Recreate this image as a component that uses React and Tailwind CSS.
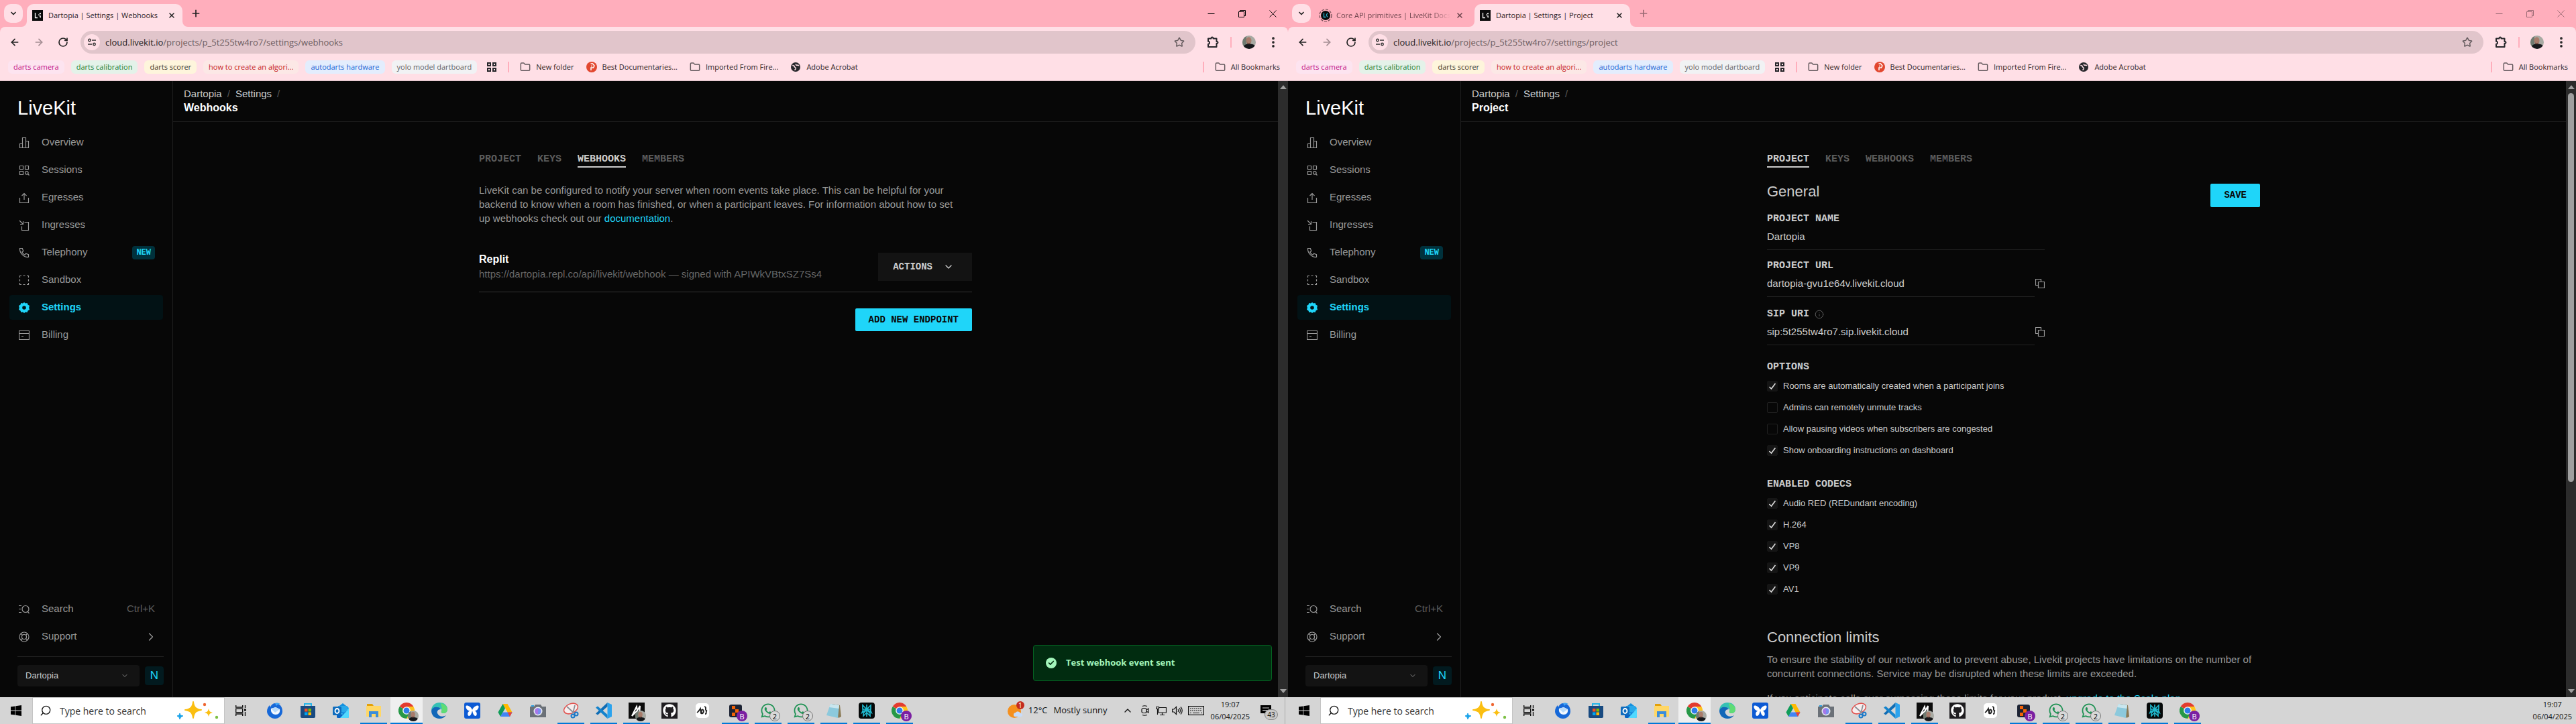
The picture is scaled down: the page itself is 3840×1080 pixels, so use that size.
import React from "react";
import {
  ArrowLeft, ArrowRight, RotateCw, ChevronDown, ChevronRight, ChevronUp, Plus, X, Star, EllipsisVertical,
  Folder, Search, Check, Info,
} from "lucide-react";
import { FaGithub, FaWhatsapp } from "react-icons/fa";

const UI = "font-['Open_Sans','Noto_Sans',sans-serif]";
const SANS = "font-['Liberation_Sans',Arial,sans-serif]";
const MONO = "font-['Liberation_Mono',monospace]";

/* ---------- browser chrome ---------- */

function Favicon() {
  return (
    <svg className="size-4 shrink-0" viewBox="0 0 16 16" aria-hidden="true">
      <rect width="16" height="16" fill="#0a0a0a" />
      <path d="M4.5 4v7.5H8M9 7.2h1.6M10.6 5.6h1.6V4M10.6 8.8h1.6v2.7" stroke="#fff" strokeWidth="1.3" fill="none" />
    </svg>
  );
}

function DocsIcon() {
  return (
    <svg className="size-5 shrink-0" viewBox="0 0 20 20" aria-hidden="true">
      <circle cx="10" cy="10" r="9" fill="none" stroke="#6e4b52" strokeWidth="1.2" strokeDasharray="4 2" />
      <circle cx="10" cy="10" r="7" fill="#0a0a0a" />
      <path d="M7.5 6.5v6h3M11 9.5l2-3M11 9.5l2 3" stroke="#29b9d8" strokeWidth="1.3" fill="none" />
    </svg>
  );
}

function Tab({ title, active, docs }) {
  return (
    <div className={"relative flex h-[34px] w-[232px] items-center rounded-t-[10px] pr-[10px] " + (docs ? "pl-1.5" : "pl-2") + (active ? " bg-[#ffdfe6]" : "")}>
      {active && (
        <svg className="absolute bottom-0 -left-2 size-2" viewBox="0 0 8 8" aria-hidden="true"><path d="M8 0v8H0a8 8 0 0 0 8-8" fill="#ffdfe6" /></svg>
      )}
      {active && (
        <svg className="absolute -right-2 bottom-0 size-2" viewBox="0 0 8 8" aria-hidden="true"><path d="M0 0v8h8a8 8 0 0 1-8-8" fill="#ffdfe6" /></svg>
      )}
      {docs ? <DocsIcon /> : <Favicon />}
      <button className={"flex-1 overflow-hidden text-left text-[11px] leading-5 whitespace-nowrap " + (docs ? "ml-1.5 bg-linear-to-r from-[#6b434b] from-85% to-transparent bg-clip-text text-transparent" : "ml-2 text-[#2a2024]")}>{title}</button>
      <button aria-label="Close tab" className="ml-2 shrink-0"><X className={"size-3 " + (active ? "text-[#222]" : "text-[#6b434b]")} strokeWidth={3} /></button>
    </div>
  );
}

function WindowControls({ active }) {
  return (
    <div className={"ml-auto flex h-10 items-center " + (active ? "text-black" : "text-[#9b6a74]")}>
      <button aria-label="Minimise" className="flex w-[46px] justify-center">
        <svg width="11" height="11" viewBox="0 0 11 11"><path d="M.5 5.5h10" stroke="currentColor" /></svg>
      </button>
      <button aria-label="Restore" className="flex w-[46px] justify-center">
        <svg width="11" height="11" viewBox="0 0 11 11" fill="none" stroke="currentColor"><path d="M.5 2.5h8v8h-8zM2.5 2.5v-2h8v8h-2" /></svg>
      </button>
      <button aria-label="Close" className="flex w-[46px] justify-center">
        <svg width="11" height="11" viewBox="0 0 11 11"><path d="M.5.5l10 10M10.5.5l-10 10" stroke="currentColor" /></svg>
      </button>
    </div>
  );
}

function TuneIcon() {
  return (
    <svg className="size-3.5" viewBox="0 0 14 14" fill="none" stroke="#333" strokeWidth="1.5" aria-hidden="true">
      <circle cx="3.5" cy="4" r="1.7" /><path d="M7 4h6M1 10h6" /><circle cx="10.5" cy="10" r="1.7" />
    </svg>
  );
}

function Puzzle() {
  return (
    <svg className="size-5" viewBox="0 0 20 20" fill="none" stroke="#27272b" strokeWidth="2" strokeLinejoin="round" aria-hidden="true">
      <path d="M3 4.5h4.500V4a1.300 1.300 0 0 1 3 0v.5H15.500V9h.6a1.400 1.400 0 0 1 0 2.800h-.6V17H3v-4.200a2 2 0 0 0 0-4z" />
    </svg>
  );
}

function Avatar({ className }) {
  return (
    <svg className={className} viewBox="0 0 20 20" aria-hidden="true">
      <clipPath id="avatarClip"><circle cx="10" cy="10" r="10" /></clipPath>
      <g clipPath="url(#avatarClip)">
        <rect width="20" height="20" fill="#a8aaa3" />
        <rect width="6" height="20" fill="#6f7a70" />
        <path d="M1 20c0-6 4-7 8-8l6 1c4 1 5 4 5 7z" fill="#17181b" />
        <ellipse cx="9.5" cy="7.5" rx="4" ry="5.3" fill="#a87c6c" />
        <path d="M7 10.5c1.500 1 3.500 1 5 0l-.5 2.300H7.600z" fill="#70493f" />
      </g>
    </svg>
  );
}

const chips = [
  ["darts camera", "bg-[#fde4f0] text-[#c2128a]"],
  ["darts calibration", "bg-[#e4f2e9] text-[#188038]"],
  ["darts scorer", "bg-[#fef5dc] text-[#3f3a2c]"],
  ["how to create an algori...", "bg-[#fce8e6] text-[#c5221f]"],
  ["autodarts hardware", "bg-[#e3edfd] text-[#1a66d6]"],
  ["yolo model dartboard", "bg-[#f1f2f4] text-[#5f6368]"],
];

function Bookmark({ icon, children }) {
  return <a href="#" className="flex items-center gap-2">{icon}<span>{children}</span></a>;
}

const folder = <Folder className="size-4 text-[#62585c]" strokeWidth={2.2} />;

function Chrome({ tabs, url, active }) {
  return (
    <header className={"shrink-0 bg-[#ffaebc] " + UI}>
      <div className="flex h-10 items-end pl-1.5">
        <button aria-label="Search tabs" className="mb-1.5 flex size-7 items-center justify-center rounded-[10px] bg-[#ffdfe6]">
          <ChevronDown className="size-3 text-[#222]" strokeWidth={3.5} />
        </button>
        <div className="ml-1.5 flex gap-1.5">
          {tabs.map((t) => <Tab key={t.title} {...t} />)}
        </div>
        <button aria-label="New tab" className="mb-3 ml-3"><Plus className={"size-4 " + (active ? "text-[#222]" : "text-[#9b6a74]")} strokeWidth={2.5} /></button>
        <WindowControls active={active} />
      </div>
      <div className="rounded-t-lg border-b border-[#d9bcc3] bg-[#ffdfe6]">
        <div className="flex h-[46px] items-center pr-3 pl-3.5 text-[#222]">
          <button aria-label="Back"><ArrowLeft className="size-4" strokeWidth={2.5} /></button>
          <button aria-label="Forward" className="ml-5"><ArrowRight className="size-4 text-[#a48d93]" strokeWidth={2.5} /></button>
          <button aria-label="Reload" className="ml-5"><RotateCw className="size-4" strokeWidth={2.5} /></button>
          <div className="ml-[18px] flex h-[34px] flex-1 items-center rounded-full bg-[#e1c5cb] pr-4 pl-[5px]">
            <button aria-label="Site information" className="flex size-6 items-center justify-center rounded-full bg-[#ffdfe6]"><TuneIcon /></button>
            <div className="ml-2 flex-1 text-[13px] leading-5 text-[#6d5d61]"><span className="text-[#221c1e]">cloud.livekit.io</span>{url}</div>
            <button aria-label="Bookmark this tab"><Star className="size-4 text-[#655b5e]" strokeWidth={2.2} /></button>
          </div>
          <button aria-label="Extensions" className="ml-4"><Puzzle /></button>
          <div className="ml-4 h-4 w-0.5 bg-[#ffaebc]" />
          <button aria-label="Profile" className="ml-4"><Avatar className="size-5" /></button>
          <button aria-label="Menu" className="ml-4"><EllipsisVertical className="size-5" strokeWidth={2.5} /></button>
        </div>
        <nav className="flex h-[34px] items-center px-3 pb-1.5 text-[11px] leading-5 text-[#2c2428]">
          <div className="flex gap-2.5">
            {chips.map(([name, look]) => (
              <button key={name} className={"h-5 rounded-md px-2 whitespace-nowrap " + look}>{name}</button>
            ))}
          </div>
          <button aria-label="Tab groups" className="ml-3.5">
            <svg className="size-4" viewBox="0 0 16 16" fill="none" stroke="#27272b" strokeWidth="2"><path d="M2 2h4v4H2zM10 2h4v4h-4zM2 10h4v4H2zM10 10h4v4h-4z" /></svg>
          </button>
          <div className="mx-4 h-4 w-0.5 bg-[#ffaebc]" />
          <div className="flex gap-[18px]">
            <Bookmark icon={folder}>New folder</Bookmark>
            <Bookmark icon={
              <svg className="size-4" viewBox="0 0 16 16"><circle cx="8" cy="8" r="8" fill="#e2472f" /><path d="M6.500 3h3l2.500 3-1.500 3H7v4M7 6.500h2" stroke="#fff" strokeWidth="1.5" fill="none" /></svg>
            }>Best Documentaries...</Bookmark>
            <Bookmark icon={folder}>Imported From Fire...</Bookmark>
            <Bookmark icon={
              <svg className="size-4" viewBox="0 0 16 16"><circle cx="8" cy="8" r="7" fill="#27272b" /><path d="M3.200 5.500c2 0 3 1 3 2s2.500 1 2 3c-.4 1.200-1.200 1.500-1.700 2M8.500 3.500c-.5 1.500 1 2 2 1.700 1-.2 2 .3 2.200 1" stroke="#ffdfe6" strokeWidth="1.6" fill="none" /></svg>
            }>Adobe Acrobat</Bookmark>
          </div>
          <div className="mr-4 ml-auto h-4 w-0.5 bg-[#ffaebc]" />
          <Bookmark icon={folder}>All Bookmarks</Bookmark>
        </nav>
      </div>
    </header>
  );
}

/* ---------- dashboard ---------- */

const navIcons = {
  Overview: <path d="M1.500 15.500v-6h4V.5h5v5h4v10zM5.500 9.500v6M10.500 5.500v10" />,
  Sessions: <><path d="M1.500 1.500h5v5h-5zM9.500 1.500h5v5h-5zM1.500 9.500h5v5h-5z" /><circle cx="11.800" cy="11.800" r="2.300" /><path d="M13.500 13.500l2 2" /></>,
  Egresses: <path d="M1.500 8v7.500h13V8M8 11V1.500M4.500 5L8 1.500 11.500 5" />,
  Ingresses: <path d="M8.500 3.500h6v12h-10v-6M1 1l5 5M6.500 2v4.500H2" />,
  Telephony: <path d="M1.500 1.500h3.800l1.500 4-2 1.500c.8 2 2.200 3.400 4.200 4.200l1.500-2 4 1.500v3.800C7.500 15 1 8.500 1.500 1.500z" />,
  Sandbox: <path d="M1.500 4V1.500H4M6.500 1.500h3M12 1.500h2.500V4M14.500 6.500v3M14.500 12v2.500H12M9.500 14.500h-3M4 14.500H1.500V12M1.500 9.500v-3" />,
  Billing: <path d="M.5 1.500h15v13H.5zM.5 5.500h15M4 9.500h3" />,
  Search: <><path d="M0 2.500h4M0 7.500h3M0 12.500h4" /><circle cx="10" cy="7.500" r="5" /><path d="M13 11l2.500 3" /></>,
  Support: <><circle cx="8" cy="8" r="7" /><circle cx="8" cy="8" r="3.500" /><path d="M3 3l2.500 2.500M13 3l-2.500 2.500M3 13l2.500-2.500M13 13l-2.500-2.500" /></>,
};

function NavIcon({ name }) {
  if (name === "Settings") {
    return (
      <svg className="size-4 shrink-0" viewBox="0 0 16 16" aria-hidden="true">
        <path fillRule="evenodd" fill="#1fd5f9" d="M8 0l2 1.600 2.600-.6.9 2.500L16 5l-.8 3 .8 3-2.500 1.500-.9 2.500-2.600-.6L8 16l-2-1.600-2.600.6-.9-2.500L0 11l.8-3L0 5l2.500-1.500.9-2.500 2.600.6zM8 5.200a2.800 2.800 0 1 0 0 5.600 2.800 2.800 0 0 0 0-5.600z" />
      </svg>
    );
  }
  return <svg className="size-4 shrink-0" viewBox="0 0 16 16" fill="none" stroke="currentColor" strokeWidth="1.2" aria-hidden="true">{navIcons[name]}</svg>;
}

function NavItem({ name, children }) {
  const on = name === "Settings";
  return (
    <a href="#" className={"flex h-[37px] items-center gap-[18px] rounded pr-3 pl-3.5 text-[15px] " + (on ? "bg-[#021215] font-bold text-[#1fd5f9]" : "text-[#999]")}>
      <NavIcon name={name} />
      <span>{name}</span>
      {children}
    </a>
  );
}

function Sidebar() {
  return (
    <aside className="flex w-[258px] shrink-0 flex-col border-r border-[#1f1f1f] px-3.5 pb-4">
      <div className="flex h-[73px] shrink-0 items-center pt-2 pl-3 text-[29px] leading-none text-white">LiveKit</div>
      <nav className="flex flex-col gap-1">
        {["Overview", "Sessions", "Egresses", "Ingresses", "Telephony", "Sandbox", "Settings", "Billing"].map((n) => (
          <NavItem key={n} name={n}>
            {n === "Telephony" && <span className={"ml-auto rounded bg-[#00313c] px-1.5 text-[12px] leading-5 font-bold text-[#1fd5f9] " + MONO}>NEW</span>}
          </NavItem>
        ))}
      </nav>
      <div className="mt-auto flex flex-col gap-1">
        <NavItem name="Search"><span className="ml-auto text-[#5c5c5c]">Ctrl+K</span></NavItem>
        <NavItem name="Support"><ChevronRight className="-mr-1 ml-auto size-5" strokeWidth={1.5} /></NavItem>
      </div>
      <div className="mx-3 mt-[11px] -mr-px flex items-center gap-2 border-t border-[#222] pt-3">
        <button className="flex h-8 flex-1 items-center justify-between rounded bg-[#131313] pr-4 pl-3 text-[13px] text-[#ccc]">
          Dartopia<ChevronDown className="size-3 text-[#888]" strokeWidth={2} />
        </button>
        <button className="size-7 rounded bg-[#021a1f] text-[17px] text-[#1fd5f9]">N</button>
      </div>
    </aside>
  );
}

function Scrollbar({ thumb }) {
  return (
    <div className="flex w-[15px] shrink-0 flex-col items-center bg-[#2c2c2c] py-1.5" aria-hidden="true">
      <svg className="w-2.5 shrink-0" viewBox="0 0 10 6"><path d="M5 0l5 6H0z" fill="#9f9f9f" /></svg>
      {thumb ? <div className="mt-1.5 h-[64%] w-[9px] rounded-full bg-[#9f9f9f]" /> : null}
      <svg className="mt-auto w-2.5 shrink-0" viewBox="0 0 10 6"><path d="M5 6L0 0h10z" fill="#9f9f9f" /></svg>
    </div>
  );
}

function Dashboard({ page, children, thumb }) {
  return (
    <div className={"relative flex min-h-0 flex-1 bg-[#070707] " + SANS}>
      <Sidebar />
      <div className="flex min-w-0 flex-1 flex-col overflow-hidden">
        <div className="shrink-0 border-b border-[#1f1f1f] px-4 pt-2 pb-2.5 leading-[21px]">
          <div className="flex gap-2 text-[15px] text-[#ccc]">
            <a href="#">Dartopia</a><span className="text-[#555]">/</span><a href="#">Settings</a><span className="text-[#555]">/</span>
          </div>
          <h1 className="text-[16px] font-bold text-white">{page}</h1>
        </div>
        <main className="mx-auto min-h-0 w-full max-w-[735px] flex-1 pt-[46px]">
          <nav className={"flex gap-6 text-[15px] leading-5 font-bold " + MONO}>
            {["Project", "Keys", "Webhooks", "Members"].map((t) => (
              <a key={t} href="#" className={"border-b-2 uppercase " + (t === page ? "border-[#ccc] text-[#ccc]" : "border-transparent text-[#5c5c5c]")}>{t}</a>
            ))}
          </nav>
          {children}
        </main>
      </div>
      <Scrollbar thumb={thumb} />
    </div>
  );
}

const primary = "rounded-xs bg-[#1fd5f9] px-5 text-[14px] font-bold text-[#0a0a0a] uppercase " + MONO;

function WebhooksPage() {
  return (
    <Dashboard page="Webhooks">
      <p className="mt-[23px] pr-5 text-[15px] leading-[21px] text-[#999]">
        LiveKit can be configured to notify your server when room events take place. This can be helpful for your backend to know when a room has finished, or when a participant leaves. For information about how to set up webhooks check out our <a href="#" className="text-[#1fd5f9]">documentation</a>.
      </p>
      <div className="mt-[41px] flex justify-between border-b border-[#333] pb-4">
        <div>
          <h2 className="text-[16px] leading-5 font-bold text-white">Replit</h2>
          <p className="mt-0.5 text-[15px] leading-5 text-[#666]">https://dartopia.repl.co/api/livekit/webhook — signed with APIWkVBtxSZ7Ss4</p>
        </div>
        <button className={"flex h-[42px] items-center gap-4 bg-[#131313] pr-[27px] pl-[22px] text-[14px] font-bold text-[#ccc] " + MONO}>
          ACTIONS<ChevronDown className="size-4" strokeWidth={2} />
        </button>
      </div>
      <div className="mt-6 flex justify-end"><button className={"h-[34px] " + primary}>Add new endpoint</button></div>
      <div role="status" className={"absolute right-6 bottom-6 flex h-[54px] w-[356px] items-center gap-3.5 rounded border border-[#046322] bg-[#012c10] px-[18px] text-[13px] font-bold text-[#a3f5bb] " + UI}>
        <span className="flex size-4 items-center justify-center rounded-full bg-[#a3f5bb]"><Check className="size-2.5 text-[#012c10]" strokeWidth={4} /></span>
        Test webhook event sent
      </div>
    </Dashboard>
  );
}

const label = "block text-[15px] leading-5 font-bold text-[#ccc] " + MONO;

function Field({ id, title, value, copy, info, className }) {
  return (
    <div className={className + " w-[414px]"}>
      <div className="flex items-center gap-2">
        <label htmlFor={id} className={label}>{title}</label>
        {info && <Info className="size-3.5 text-[#666]" strokeWidth={1.5} />}
      </div>
      <div className="mt-1.5 flex items-start gap-px">
        <input id={id} defaultValue={value} readOnly={copy} className="h-[30px] min-w-0 flex-1 border-b border-[#222] bg-transparent pb-2.5 text-[15px] leading-5 text-[#ccc]" />
        {copy && (
          <button aria-label={"Copy " + title} className="mt-[3px]">
            <svg className="size-3.5" viewBox="0 0 14 14" fill="none" stroke="#999" strokeWidth="1.2"><path d="M4.500 9.500h-4v-9h8v3.500M4.500 4.500h9v9h-9z" /></svg>
          </button>
        )}
      </div>
    </div>
  );
}

function Checks({ title, items, className }) {
  return (
    <fieldset className={className}>
      <legend className={label}>{title}</legend>
      <div className="mt-2.5 flex flex-col items-start gap-4">
        {items.map(([text, on]) => (
          <label key={text} className="flex h-4 items-center gap-2 text-[13px] text-[#ccc]">
            <span className="grid size-4 place-items-center">
              <input type="checkbox" defaultChecked={on} className="peer col-start-1 row-start-1 size-4 appearance-none rounded-xs border border-[#222] checked:border-[#151515] checked:bg-[#151515]" />
              <svg className="pointer-events-none invisible col-start-1 row-start-1 size-3 peer-checked:visible" viewBox="0 0 12 12" fill="none" stroke="#ddd" strokeWidth="1.6"><path d="M1.500 7L4.500 10 10.500 2" /></svg>
            </span>
            {text}
          </label>
        ))}
      </div>
    </fieldset>
  );
}

function ProjectPage() {
  return (
    <Dashboard page="Project" thumb>
      <div className="mt-6 flex items-start justify-between">
        <h2 className="text-[22px] leading-6 text-[#ccc]">General</h2>
        <button className={"h-[35px] " + primary}>Save</button>
      </div>
      <Field className="mt-2" id="project-name" title="PROJECT NAME" value="Dartopia" />
      <Field className="mt-3.5" id="project-url" title="PROJECT URL" value="dartopia-gvu1e64v.livekit.cloud" copy />
      <Field className="mt-4" id="sip-uri" title="SIP URI" value="sip:5t255tw4ro7.sip.livekit.cloud" copy info />
      <Checks className="mt-[23px]" title="OPTIONS" items={[
        ["Rooms are automatically created when a participant joins", true],
        ["Admins can remotely unmute tracks", false],
        ["Allow pausing videos when subscribers are congested", false],
        ["Show onboarding instructions on dashboard", true],
      ]} />
      <Checks className="mt-[33px]" title="ENABLED CODECS" items={[
        ["Audio RED (REDundant encoding)", true], ["H.264", true], ["VP8", true], ["VP9", true], ["AV1", true],
      ]} />
      <h2 className="mt-[52px] text-[22px] leading-6 text-[#ccc]">Connection limits</h2>
      <p className="mt-2.5 text-[15px] leading-[21px] text-[#999]">To ensure the stability of our network and to prevent abuse, Livekit projects have limitations on the number of concurrent connections. Service may be disrupted when these limits are exceeded.</p>
      <p className="mt-4 text-[15px] leading-[21px] text-[#999]">If you anticipate calls ever surpassing these limits for your product, <a href="#" className="text-[#1fd5f9]">upgrade to the Scale plan</a>.</p>
    </Dashboard>
  );
}

/* ---------- taskbar ---------- */

function Badge({ children, look }) {
  return <span className={"absolute -right-1.5 -bottom-1 flex size-4 items-center justify-center rounded-full text-[11px] leading-none " + look}>{children}</span>;
}

const purple = "bg-[#7b1fa2] text-white";
const grey = "border border-[#777] bg-[#d8d8d8] text-black";

const ChromeLogo = () => (
  <svg className="size-6" viewBox="0 0 24 24">
    <circle cx="12" cy="12" r="12" fill="#fff" />
    <path d="M12 12L1.600 6A12 12 0 0 1 22.400 6z" fill="#e33b2e" />
    <path d="M12 12L1.600 6A12 12 0 0 0 12 24l5.200-9z" fill="#279847" />
    <path d="M12 12l5.200 3L12 24A12 12 0 0 0 22.400 6H12z" fill="#fcc31e" />
    <circle cx="12" cy="12" r="5.800" fill="#fff" /><circle cx="12" cy="12" r="4.500" fill="#2f7de9" />
  </svg>
);

const WhatsApp = () => <FaWhatsapp className="size-6 text-[#1f9254]" />;

const apps = [
  { name: "Thunderbird", icon: (
    <svg className="size-6" viewBox="0 0 24 24"><path d="M12 1c7 0 11 5 11 12 0 6-5 11-11 11S0 19 0 13c0-4 2-7 4-9l1 3c1-3 4-6 7-6z" fill="#1668d8" /><path d="M12 1c3-1 6 0 8 1-3 0-5 1-6 3z" fill="#3fa4f5" /><path d="M6 9l7-2 6 3c1 5-2 8-6 8s-8-3-7-9z" fill="#f2f8ff" /><path d="M6 9l6 6 7-5-6-3z" fill="#b9dbfb" /></svg>) },
  { name: "Microsoft Store", icon: (
    <svg className="size-6" viewBox="0 0 24 24"><path d="M7 6V2h10v4" fill="none" stroke="#23b5ea" strokeWidth="2" /><path d="M1 5h22v16a2 2 0 0 1-2 2H3a2 2 0 0 1-2-2z" fill="#184a80" /><path d="M7 9h4.500v4.500H7z" fill="#f25022" /><path d="M12.500 9H17v4.500h-4.500z" fill="#7fba00" /><path d="M7 14.500h4.500V19H7z" fill="#00a4ef" /><path d="M12.500 14.500H17V19h-4.500z" fill="#ffb900" /></svg>) },
  { name: "Outlook", icon: (
    <svg className="size-6" viewBox="0 0 24 24"><path d="M6 8l9-7 9 7v13a2 2 0 0 1-2 2H8a2 2 0 0 1-2-2z" fill="#1490df" /><path d="M8 5h14v9H8z" fill="#28a8ea" /><path d="M6 10l9 7 9-9v13a2 2 0 0 1-2 2H8z" fill="#50d9ff" /><path d="M24 9L11 23H8a2 2 0 0 1-2-2v-9l8 6z" fill="#0a63c4" /><rect y="6" width="13" height="13" rx="1.5" fill="#0f6cbd" /><ellipse cx="6.5" cy="12.5" rx="3" ry="3.5" fill="none" stroke="#fff" strokeWidth="1.8" /></svg>) },
  { name: "File Explorer", open: true, icon: (
    <svg className="size-6" viewBox="0 0 24 24"><path d="M2 2h8l2 3h10v4H2z" fill="#e3a008" /><path d="M1 5h22v16H1z" fill="#ffd766" /><path d="M5 22v-9h14v9h-4v-5H9v5z" fill="#3b8ddb" /></svg>) },
  { name: "Chrome", active: true, icon: <><ChromeLogo /><Avatar className="absolute -right-1.5 -bottom-1 size-4" /></> },
  { name: "Edge", icon: (
    <svg className="size-6" viewBox="0 0 24 24"><path d="M0 12C0 5 5 0 12 0c8 0 12 5 12 10 0 4-3 6-6 6-2 0-4-1-3-3 1-3-1-5-4-5C6 8 1 9 0 12z" fill="#35c1b5" /><path d="M14 1c6 1 10 5 10 9 0 4-3 6-6 6-2 0-4-1-3-3 2-5-1-9-1-12z" fill="#5fdc74" /><path d="M0 12c1-4 5-6 9-5 3 0 5 2 5 3-4 0-6 3-5 6 2 5 8 6 13 3-2 3-6 5-10 5C5 24 0 19 0 12z" fill="#1267b8" /></svg>) },
  { name: "Butterfly", icon: (
    <svg className="size-6" viewBox="0 0 24 24"><rect width="24" height="24" rx="3" fill="#0c5ad4" /><path d="M12 11C10 5 3 3 2.500 5.500 2 9 5 12 8.500 12.500 5 13 4 19 7 20c3 0 4-4 5-8 1 4 2 8 5 8 3-1 2-7-1.500-7.500C19 12 22 9 21.500 5.500 21 3 14 5 12 11z" fill="#fff" /></svg>) },
  { name: "Google Drive", icon: (
    <svg className="size-6" viewBox="0 0 24 24"><path d="M8.500 2h7l7 12.500h-7z" fill="#ffba00" /><path d="M8.500 2L1.500 14.500 5 21l7-12.500z" fill="#0f9d58" /><path d="M5 21l3.500-6.500h14L19 21z" fill="#4285f4" /><path d="M19 21l-3.500-6.500h7z" fill="#ea4335" /></svg>) },
  { name: "Camera", icon: (
    <svg className="size-6" viewBox="0 0 24 24"><path d="M2 4h4v3H2z" fill="#2fa1e0" /><path d="M0 6h6l2-3h8l2 3h6v16H0z" fill="#6b7178" /><circle cx="12" cy="13" r="6.500" fill="#eceff2" /><circle cx="12" cy="13" r="4.800" fill="#7a8ef0" /><path d="M12 8.200a4.800 4.800 0 0 0 0 9.600z" fill="#a778e8" /></svg>) },
  { name: "Snipping Tool", open: true, icon: (
    <svg className="size-6" viewBox="0 0 24 24"><ellipse cx="12" cy="9" rx="11" ry="7" transform="rotate(-25 12 9)" fill="#f7eeee" stroke="#e0524f" strokeWidth="1.5" /><path d="M6 6l10 9M18 4l-3 12" stroke="#8a8f96" strokeWidth="1.8" /><circle cx="20" cy="17" r="2.500" fill="none" stroke="#1978c8" strokeWidth="2" /><circle cx="15" cy="20" r="2.500" fill="none" stroke="#1978c8" strokeWidth="2" /></svg>) },
  { name: "Visual Studio Code", open: true, icon: (
    <svg className="size-6" viewBox="0 0 24 24"><path d="M17.500 0L24 3v18l-6.500 3z" fill="#2ba3ee" /><path d="M17.500 0v6L3 18.500 0 16.500z" fill="#0f6db5" /><path d="M17.500 24v-6L3 5.500 0 7.500z" fill="#1583cc" /></svg>) },
  { name: "Autodarts", open: true, icon: <>
    <svg className="size-6" viewBox="0 0 24 24"><rect width="24" height="24" fill="#0c0c0c" /><path d="M5 20L12 6l1 6 4-7-1 15-4-7z" fill="none" stroke="#fff" strokeWidth="2" /></svg>
    <Avatar className="absolute -right-0.5 -bottom-1 size-4" /></> },
  { name: "GitHub", icon: <span className="flex size-6 items-center justify-center bg-[#1f1d20]"><FaGithub className="size-5 text-white" /></span> },
  { name: "Sketch", icon: (
    <svg className="size-6" viewBox="0 0 24 24"><rect x="2" y="1" width="20" height="22" rx="5" fill="#fff" /><path d="M4 15c2-1 3-3 5-6l1 7c3 2 5-3 3-5s-4 3-1 5M15 6c4 1 1 4 2 5s2 1 1 2 1 4-2 4" fill="none" stroke="#222" strokeWidth="1.8" /></svg>) },
  { name: "Replit", open: true, icon: <>
    <svg className="size-6" viewBox="0 0 24 24"><rect x="3" y="3" width="19" height="19" rx="3" fill="#1c2333" /><path d="M7 5h5v5H7zM12 10h5v5h-5zM7 15h5v5H7z" fill="#f26207" /></svg>
    <Badge look={purple}>B</Badge></> },
  { name: "WhatsApp", open: true, icon: <><WhatsApp /><Badge look={grey}>2</Badge></> },
  { name: "WhatsApp 2", open: true, icon: <><WhatsApp /><Badge look={grey}>2</Badge></> },
  { name: "Notepad", open: true, icon: (
    <svg className="size-6" viewBox="0 0 24 24"><path d="M9 2l12 2 2 17-4 2z" fill="#8a7a55" /><path d="M7 2l13 2-2 19L1 19z" fill="#8cc9dc" /><path d="M7 2l13 2-.5 5L5 7z" fill="#c9e6ee" /></svg>) },
  { name: "Perplexity", open: true, icon: (
    <svg className="size-6" viewBox="0 0 24 24"><rect width="24" height="24" rx="4" fill="#050808" /><path d="M12 3v18M12 10L6 4v6h12V4l-6 6-7 5 2-5M12 10l7 5-2-5M12 11l-5 5v4l5-5 5 5v-4z" fill="none" stroke="#20b8cd" strokeWidth="1.7" /></svg>) },
  { name: "Chrome B", open: true, icon: <><ChromeLogo /><Badge look={purple}>B</Badge></> },
];

function Tray() {
  const s = { fill: "none", stroke: "#111", strokeWidth: 1.2 };
  return (
    <>
      <div className="relative mr-2">
        <svg className="size-6" viewBox="0 0 24 24"><circle cx="11" cy="13" r="10" fill="#f5901e" /><path d="M10 19a3.500 3.500 0 0 1 3-4 4 4 0 0 1 7 1 2.500 2.500 0 0 1 1 5h-9a2 2 0 0 1-2-2z" fill="#c7dcfa" /></svg>
        <span className="absolute -top-0.5 -right-0.5 flex size-3 items-center justify-center rounded-full bg-[#c42b1c] text-[10px] text-white">1</span>
      </div>
      <span className="mr-[9px] text-[13px]">12°C</span>
      <span className="mr-[22px] text-[13px]">Mostly sunny</span>
      <button aria-label="Hidden icons" className="mr-2.5"><ChevronUp className="size-4" strokeWidth={2} /></button>
      <div className="flex items-center gap-2">
        <svg className="size-4" viewBox="0 0 16 16" {...s}><rect x="3" y="4.5" width="7" height="7" rx="2" /><path d="M10 7l3-2v6l-3-2M4 1.500q3-1.500 7 0M4 14.500q3 1.500 7 0" /></svg>
        <svg className="size-4" viewBox="0 0 16 16" {...s}><path d="M5 3.500h10.500v7.500H4V6M9.500 11v3.500M6 14.500h7M.5 2.500h4v3h-4zM2.500 5.500V14" /></svg>
        <svg className="size-4" viewBox="0 0 16 16" {...s}><path d="M.5 6v4h2.500l3.500 3.500v-11L3 6zM9 6q1.500 2 0 4M11 4q3 4 0 8M13 2.500q4.500 5.500 0 11" /></svg>
        <svg className="h-4 w-6" viewBox="0 0 24 16" {...s}><rect x=".6" y="1.6" width="22.8" height="12.8" /><path d="M3 5h18M3 8h18" strokeDasharray="2 1" /><path d="M7 11.500h10M3 11.500h2M19 11.500h2" /></svg>
      </div>
    </>
  );
}

function Taskbar({ primaryScreen }) {
  return (
    <footer className={"flex h-10 shrink-0 items-center bg-[#d5d5d5] text-[#111] " + UI}>
      <button aria-label="Start" className="ml-4">
        <svg className="size-4" viewBox="0 0 16 16"><path d="M0 2.300L6.500 1.400v6.200H0zM7.300 1.300L16 0v7.600H7.300zM0 8.400h6.500v6.200L0 13.700zM7.300 8.400H16V16l-8.700-1.300z" fill="#000" /></svg>
      </button>
      <div className="ml-4 flex h-10 w-[287px] items-center border border-[#c4c4c4] bg-white pr-2 pl-2.5">
        <Search className="size-[18px] shrink-0 -scale-x-100 text-black" strokeWidth={1.6} />
        <input aria-label="Type here to search" placeholder="Type here to search" className="ml-3 min-w-0 flex-1 text-[14px] placeholder:text-[#333]" />
        <svg className="h-9 w-[62px] shrink-0" viewBox="0 0 62 36" aria-hidden="true">
          <path d="M24 5c1 8 4 11 12 12-8 1-11 4-12 12-1-8-4-11-12-12 8-1 11-4 12-12z" fill="#fbbf12" stroke="#fbbf12" strokeWidth="2" strokeLinejoin="round" />
          <path d="M47 15c1 4 2 5 6 6-4 1-5 2-6 6-1-4-2-5-6-6 4-1 5-2 6-6z" fill="#fbbf12" />
          <path d="M4 22c.6 2.500 1.500 3.300 5 4-3 .7-4 2-5 5-.6-3-1.500-4-4-5 2.500-.7 3.400-1.500 4-4z" fill="#1aa3ea" stroke="#1aa3ea" />
          <circle cx="41" cy="9" r="2.2" fill="#ef6530" /><circle cx="59" cy="28" r="2.2" fill="#7cc043" />
        </svg>
      </div>
      <button aria-label="Task view" className="mr-[11px] ml-4">
        <svg className="size-4" viewBox="0 0 16 16" fill="none" stroke="#111" strokeWidth="1.4"><path d="M.7 0v3h10V0M.7 16v-3h10v3M.7 5.300h10v5.400H.7zM14.500 0v4M14.500 10v6" /><path d="M14.500 5.500v3" strokeWidth="3" /></svg>
      </button>
      <div className="ml-2 flex gap-px">
        {apps.map((a) => (
          <button key={a.name} aria-label={a.name} className={"flex h-10 w-12 flex-col items-center " + (a.active ? "bg-[#efefef]" : "")}>
            <span className="relative mt-2 block size-6">{a.icon}</span>
            {(a.open || a.active) && <span className={"mt-auto h-0.5 bg-[#0078d7] " + (a.active ? "w-full" : "w-10")} />}
          </button>
        ))}
      </div>
      <div className={"ml-auto flex items-center " + (primaryScreen ? "" : "pr-1.5")}>
        {primaryScreen && <Tray />}
        <div className={"text-center text-[11px] leading-[18px] " + (primaryScreen ? "ml-2.5" : "")}>19:07<br />06/04/2025</div>
        {primaryScreen && (
          <button aria-label="Notifications" className="relative mr-2.5 ml-4 w-[26px]">
            <svg className="size-4" viewBox="0 0 16 16"><path d="M0 0h16v12H9l-3 4v-4H0z" fill="#000" /><path d="M3 4h10M3 7.500h10" stroke="#d5d5d5" /></svg>
            <span className="absolute right-0 -bottom-1.5 flex h-4 w-5 items-center justify-center rounded-full border border-[#888] bg-[#c9c9c9] text-[10px]">43</span>
          </button>
        )}
        {primaryScreen && <div className="mr-1 h-10 w-px bg-[#aaa]" />}
      </div>
    </footer>
  );
}

export default function App() {
  return (
    <div className="flex h-screen overflow-hidden bg-[#ffaebc]">
      <section className="flex min-w-0 flex-1 flex-col">
        <Chrome active url="/projects/p_5t255tw4ro7/settings/webhooks" tabs={[{ title: "Dartopia | Settings | Webhooks", active: true }]} />
        <WebhooksPage />
        <Taskbar primaryScreen />
      </section>
      <section className="flex min-w-0 flex-1 flex-col">
        <Chrome url="/projects/p_5t255tw4ro7/settings/project" tabs={[{ title: "Core API primitives | LiveKit Docs", docs: true }, { title: "Dartopia | Settings | Project", active: true }]} />
        <ProjectPage />
        <Taskbar />
      </section>
    </div>
  );
}
